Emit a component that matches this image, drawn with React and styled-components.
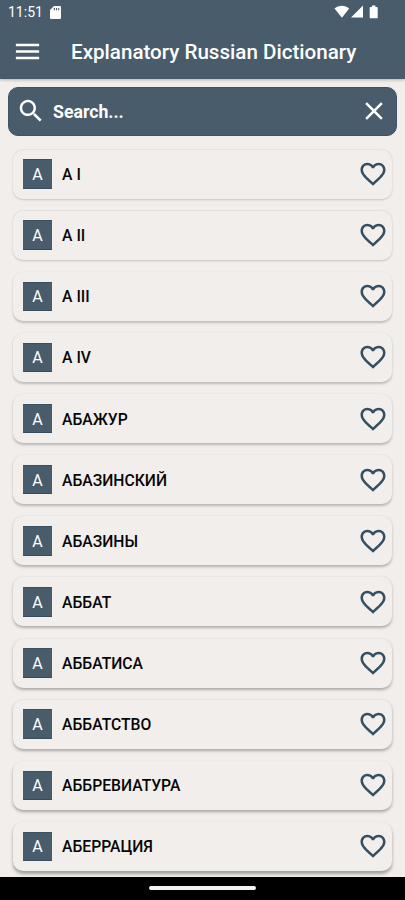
import React, { useState } from "react";
import styled, { createGlobalStyle } from "styled-components";

const GlobalStyle = createGlobalStyle`
  * {
    box-sizing: border-box;
  }
  body {
    margin: 0;
    background-color: #f1eeeb;
    font-family: Roboto, "Noto Sans", sans-serif;
  }
`;

const Screen = styled.div`
  width: 405px;
  height: 900px;
  display: flex;
  flex-direction: column;
  overflow: hidden;
  background-color: #f1eeeb;
`;

const Header = styled.header`
  height: 78.5px;
  flex-shrink: 0;
  color: white;
  background-color: #485c6c;
  box-shadow: 0 1px 3px rgba(0, 0, 0, 0.25);
`;

const StatusBar = styled.div`
  height: 24px;
  display: flex;
  align-items: center;
  padding: 0 26px 0 8px;
  svg {
    display: block;
  }
`;

const Clock = styled.span`
  flex: 1;
  display: flex;
  align-items: center;
  gap: 7.5px;
  font-size: 14px;
`;

const Toolbar = styled.div`
  height: 55px;
  display: flex;
  align-items: center;
  padding-left: 12px;
`;

const Title = styled.h1`
  margin: 0 0 0 28px;
  font-size: 20.6px;
  font-weight: 500;
  line-height: 24px;
  white-space: nowrap;
`;

const SearchBar = styled.div`
  height: 49px;
  flex-shrink: 0;
  margin: 8px 8px 0;
  padding: 0 7px;
  display: flex;
  align-items: center;
  border-radius: 10px;
  color: white;
  background-color: #485c6c;
  border: 1px solid #3e5466;
`;

const SearchText = styled.span`
  flex: 1;
  margin-left: 7px;
  padding-top: 2px;
  font-size: 17.7px;
  font-weight: 700;
`;

const List = styled.div`
  flex: 1;
  min-height: 0;
  overflow: hidden;
  display: flex;
  flex-direction: column;
  gap: 12.14px;
  padding: 14px 12.6px 0;
`;

const Card = styled.div`
  height: 49px;
  flex-shrink: 0;
  display: flex;
  align-items: center;
  padding: 0 4.5px 0 10px;
  border-radius: 10px;
  background-color: #f1eeeb;
  box-shadow: 0 ${p => 0.8 + p.$depth * 0.12}px ${p => 2 + p.$depth * 0.12}px
    rgba(0, 0, 0, ${p => 0.17 + p.$depth * 0.014});
`;

const Letter = styled.div`
  width: 29.5px;
  height: 29.5px;
  display: flex;
  align-items: center;
  justify-content: center;
  color: white;
  background-color: #485c6c;
  border-top: 1px solid #3a5062;
  border-bottom: 1px solid #364c5e;
  padding-top: 1px;
  font-size: 16px;
`;

const Word = styled.div`
  flex: 1;
  margin-left: 10px;
  padding-top: 1px;
  color: #060606;
  font-size: 15.7px;
  font-weight: 500;
`;

const HeartButton = styled.button`
  width: 30px;
  height: 30px;
  padding: 0;
  border: 0;
  background: none;
  color: #344e62;
  cursor: pointer;
  svg {
    display: block;
  }
`;

const NavigationBar = styled.div`
  height: 23px;
  flex-shrink: 0;
  display: flex;
  align-items: center;
  justify-content: center;
  background-color: black;
`;

const Handle = styled.div`
  width: 107px;
  height: 4px;
  margin-bottom: 1px;
  border-radius: 2px;
  background-color: #f4f4f4;
`;

const icons = {
  menu: "M3 18h18v-2H3v2zm0-5h18v-2H3v2zm0-7v2h18V6H3z",
  search:
    "M15.5 14h-.79l-.28-.27C15.41 12.59 16 11.11 16 9.5 16 5.91 13.09 3 9.5 3S3 5.91 3 9.5 5.91 16 9.5 16c1.61 0 3.09-.59 4.23-1.57l.27.28v.79l5 4.99L20.49 19l-4.99-5zm-6 0C7.01 14 5 11.99 5 9.5S7.01 5 9.5 5 14 7.01 14 9.5 11.99 14 9.5 14z",
  close:
    "M19 6.41L17.59 5 12 10.59 6.41 5 5 6.41 10.59 12 5 17.59 6.41 19 12 13.41 17.59 19 19 17.59 13.41 12z",
  heartOutline:
    "M16.5 3c-1.74 0-3.41.81-4.5 2.09C10.91 3.81 9.24 3 7.5 3 4.42 3 2 5.42 2 8.5c0 3.78 3.4 6.86 8.55 11.54L12 21.35l1.45-1.32C18.6 15.36 22 12.28 22 8.5 22 5.42 19.58 3 16.5 3zm-4.4 15.55l-.1.1-.1-.1C7.14 14.24 4 11.39 4 8.5 4 6.5 5.5 5 7.5 5c1.54 0 3.04.99 3.57 2.36h1.87C13.46 5.99 14.96 5 16.5 5c2 0 3.5 1.5 3.5 3.5 0 2.89-3.14 5.74-7.9 10.05z",
  heart:
    "M12 21.35l-1.45-1.32C5.4 15.36 2 12.28 2 8.5 2 5.42 4.42 3 7.5 3c1.74 0 3.41.81 4.5 2.09C13.09 3.81 14.76 3 16.5 3 19.58 3 22 5.42 22 8.5c0 3.78-3.4 6.86-8.55 11.54L12 21.35z"
};

const Icon = ({ name, size = 30 }) => (
  <svg width={size} height={size} viewBox="0 0 24 24" fill="currentColor">
    <path d={icons[name]} />
  </svg>
);

const words = [
  "А I",
  "А II",
  "А III",
  "А IV",
  "АБАЖУР",
  "АБАЗИНСКИЙ",
  "АБАЗИНЫ",
  "АББАТ",
  "АББАТИСА",
  "АББАТСТВО",
  "АББРЕВИАТУРА",
  "АБЕРРАЦИЯ"
];

const WordCard = ({ word, depth }) => {
  const [liked, setLiked] = useState(false);
  return (
    <Card $depth={depth}>
      <Letter>{word[0]}</Letter>
      <Word>{word}</Word>
      <HeartButton onClick={() => setLiked(!liked)}>
        <Icon name={liked ? "heart" : "heartOutline"} />
      </HeartButton>
    </Card>
  );
};

export default () => (
  <Screen>
    <GlobalStyle />
    <Header>
      <StatusBar>
        <Clock>
          11:51
          <svg width="11" height="13" viewBox="0 0 11 13">
            <path
              fill="white"
              fillRule="evenodd"
              d="M4 0h6a1 1 0 0 1 1 1v11a1 1 0 0 1-1 1H1a1 1 0 0 1-1-1V4zM3.8 2v2.2h1.2V2zM6 2v2.2h1.1V2zM8.2 2v2.2h1.1V2z"
            />
          </svg>
        </Clock>
        <svg width="45" height="14" viewBox="0 0 45 14" fill="white">
          <path d="M.5 3.4C4.8-.2 10.9-.2 15.2 3.4L7.9 12.7z" />
          <path d="M29 .6v12H17z" />
          <path d="M38 .5h3.4v1.6h1.5q.8 0 .8.8v9.5q0 .9-.9.9h-6.2q-.9 0-.9-.9V2.9q0-.8.8-.8H38z" />
        </svg>
      </StatusBar>
      <Toolbar>
        <Icon name="menu" size={31} />
        <Title>Explanatory Russian Dictionary</Title>
      </Toolbar>
    </Header>
    <SearchBar>
      <Icon name="search" />
      <SearchText>Search...</SearchText>
      <Icon name="close" />
    </SearchBar>
    <List>
      {words.map((word, i) => (
        <WordCard key={word} word={word} depth={i} />
      ))}
    </List>
    <NavigationBar>
      <Handle />
    </NavigationBar>
  </Screen>
);
